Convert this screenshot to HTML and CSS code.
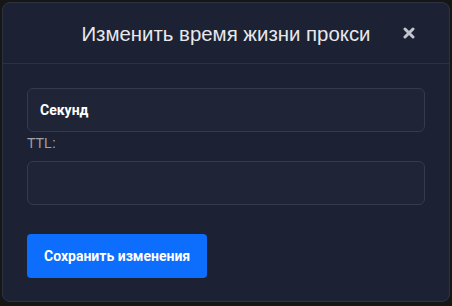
FILE: index.html
```html
<!DOCTYPE html>
<html>
  <head>
    <title>Изменить время жизни прокси</title>
    <link rel="stylesheet" href="styles.css">
  </head>
  <body>
    <div class="modal">
      <div class="modal-header">
        <h2 class="modal-title">Изменить время жизни прокси</h2>
        <svg class="close" width="12" height="12" viewBox="0 0 12 12">
          <path d="M2 2 L10 10 M10 2 L2 10" stroke="#c3c6ce" stroke-width="3" stroke-linecap="round"/>
        </svg>
      </div>
      <div class="modal-body">
        <div class="field unit">Секунд</div>
        <label class="label">TTL:</label>
        <div class="field"></div>
        <button class="save">Сохранить изменения</button>
      </div>
    </div>
  </body>
</html>
```

FILE: styles.css
```css
body {
    margin: 0;
    background: #161616;
    font-family: Roboto, "Liberation Sans", sans-serif;
}
.modal {
    margin: 2px 2px 0 2px;
    width: 448px;
    height: 300px;
    background: #1c2133;
    border: 1px solid #2c3244;
    border-radius: 8px;
    box-sizing: border-box;
    position: relative;
}
.modal-header {
    height: 60px;
    border-bottom: 1px solid #2c3244;
    display: flex;
    align-items: center;
    justify-content: center;
}
.modal-title {
    margin: 0;
    font-family: "Liberation Sans", Arial, sans-serif;
    font-weight: normal;
    font-size: 20.4px;
    color: #e8e8ec;
    padding-top: 2px;
}
.close {
    position: absolute;
    right: 34px;
    top: 24px;
}
.modal-body {
    padding: 24px 24px 24px 24px;
}
.field {
    height: 44px;
    box-sizing: border-box;
    border: 1px solid #343b4d;
    border-radius: 6px;
    background: #1f2537;
    display: flex;
    align-items: center;
    padding: 0 12px;
    color: #ffffff;
    font-size: 14px;
    font-weight: bold;
}
.label {
    display: block;
    margin: 3px 0 9px 0;
    font-family: "Liberation Sans", Arial, sans-serif;
    font-size: 14px;
    color: #a0a1a6;
    line-height: 17px;
}
.save {
    margin-top: 29px;
    height: 44px;
    padding: 0 17px;
    border: none;
    border-radius: 4px;
    background: #0d6efd;
    color: #ffffff;
    font-family: Roboto, sans-serif;
    font-size: 14px;
    font-weight: bold;
}
```
